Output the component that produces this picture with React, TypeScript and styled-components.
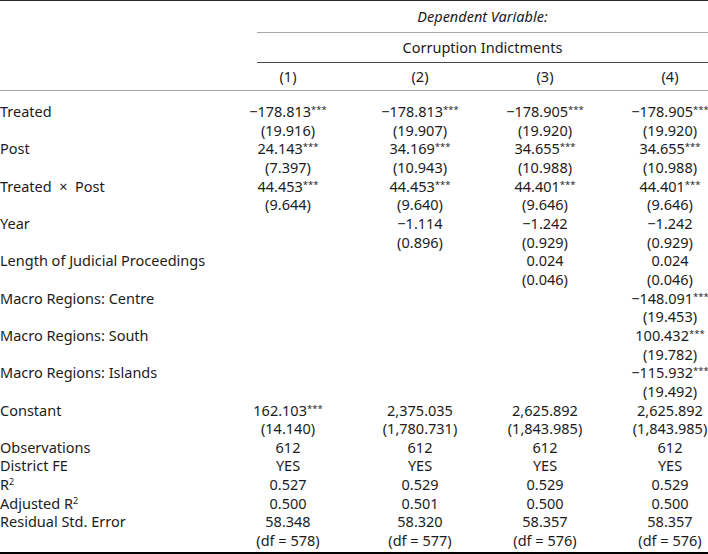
import React from "react";
import styled, { createGlobalStyle } from "styled-components";

const GlobalStyle = createGlobalStyle`
  html, body {
    margin: 0;
    padding: 0;
    background: #ffffff;
    overflow: hidden;
  }
  body {
    font-family: "Noto Sans", "Open Sans", sans-serif;
    color: #1c1c1c;
  }
`;

const COLS = "219px 138px 126px 124px 126px";

const Frame = styled.div`
  width: 708px;
  height: 554px;
  overflow: hidden;
  font-size: 14.5px;
`;

const Table = styled.div`
  width: 733px;
  border-top: 1px solid #2b2b2b;
`;

const SpanRow = styled.div<{ $h: number }>`
  display: flex;
  height: ${({ $h }) => $h}px;
`;

const Spacer = styled.div`
  width: 257px;
  flex: none;
`;

const SpanCell = styled.div<{ $line: string; $italic?: boolean; $pad: number }>`
  width: 451px;
  display: flex;
  align-items: center;
  justify-content: center;
  padding-bottom: ${({ $pad }) => $pad}px;
  box-sizing: border-box;
  border-bottom: ${({ $line }) => $line};
  font-style: ${({ $italic }) => ($italic ? "italic" : "normal")};
`;

const Grid = styled.div`
  display: grid;
  grid-template-columns: ${COLS};
`;

const NumberRow = styled(Grid)`
  height: 26px;
  align-items: center;
  border-bottom: 1px solid #a0a0a0;
  padding-bottom: 1px;
`;

const Body = styled.div`
  padding-top: 11px;
  padding-bottom: 2px;
  border-bottom: 3px solid #000;
`;

const Line = styled(Grid)`
  line-height: 18.65px;
  white-space: nowrap;
`;

const Label = styled.div`
  text-align: left;
  white-space: pre;
`;

const Cell = styled.div`
  text-align: center;
`;

const Stars = styled.sup`
  font-size: 9.5px;
  line-height: 0;
  vertical-align: 4px;
`;

const Sup = styled.sup`
  font-size: 9px;
  line-height: 0;
  vertical-align: 5px;
`;

type Coef = { label: React.ReactNode; est: string[]; se: string[] };

const coefs: Coef[] = [
  {
    label: "Treated",
    est: ["−178.813***", "−178.813***", "−178.905***", "−178.905***"],
    se: ["(19.916)", "(19.907)", "(19.920)", "(19.920)"],
  },
  {
    label: "Post",
    est: ["24.143***", "34.169***", "34.655***", "34.655***"],
    se: ["(7.397)", "(10.943)", "(10.988)", "(10.988)"],
  },
  {
    label: "Treated  ×  Post",
    est: ["44.453***", "44.453***", "44.401***", "44.401***"],
    se: ["(9.644)", "(9.640)", "(9.646)", "(9.646)"],
  },
  {
    label: "Year",
    est: ["", "−1.114", "−1.242", "−1.242"],
    se: ["", "(0.896)", "(0.929)", "(0.929)"],
  },
  {
    label: "Length of Judicial Proceedings",
    est: ["", "", "0.024", "0.024"],
    se: ["", "", "(0.046)", "(0.046)"],
  },
  {
    label: "Macro Regions: Centre",
    est: ["", "", "", "−148.091***"],
    se: ["", "", "", "(19.453)"],
  },
  {
    label: "Macro Regions: South",
    est: ["", "", "", "100.432***"],
    se: ["", "", "", "(19.782)"],
  },
  {
    label: "Macro Regions: Islands",
    est: ["", "", "", "−115.932***"],
    se: ["", "", "", "(19.492)"],
  },
  {
    label: "Constant",
    est: ["162.103***", "2,375.035", "2,625.892", "2,625.892"],
    se: ["(14.140)", "(1,780.731)", "(1,843.985)", "(1,843.985)"],
  },
];

const stats: { label: React.ReactNode; values: string[] }[] = [
  { label: "Observations", values: ["612", "612", "612", "612"] },
  { label: "District FE", values: ["YES", "YES", "YES", "YES"] },
  {
    label: (
      <>
        R<Sup>2</Sup>
      </>
    ),
    values: ["0.527", "0.529", "0.529", "0.529"],
  },
  {
    label: (
      <>
        Adjusted R<Sup>2</Sup>
      </>
    ),
    values: ["0.500", "0.501", "0.500", "0.500"],
  },
  { label: "Residual Std. Error", values: ["58.348", "58.320", "58.357", "58.357"] },
  { label: "", values: ["(df = 578)", "(df = 577)", "(df = 576)", "(df = 576)"] },
];

function Value({ text }: { text: string }) {
  const m = text.match(/^(.*?)(\*+)$/);
  if (!m) return <Cell>{text}</Cell>;
  return (
    <Cell>
      {m[1]}
      <Stars>{m[2]}</Stars>
    </Cell>
  );
}

export default function App() {
  return (
    <Frame>
      <GlobalStyle />
      <Table>
        <SpanRow $h={32}>
          <Spacer />
          <SpanCell $italic $pad={2} $line="1px solid #a8a8a8">
            Dependent Variable:
          </SpanCell>
        </SpanRow>
        <SpanRow $h={30}>
          <Spacer />
          <SpanCell $pad={1} $line="1.5px solid #4a4a4a">
            Corruption Indictments
          </SpanCell>
        </SpanRow>
        <NumberRow>
          <Label />
          <Cell>(1)</Cell>
          <Cell>(2)</Cell>
          <Cell>(3)</Cell>
          <Cell>(4)</Cell>
        </NumberRow>
        <Body>
          {coefs.map((c, i) => (
            <React.Fragment key={i}>
              <Line>
                <Label>{c.label}</Label>
                {c.est.map((v, j) => (
                  <Value key={j} text={v} />
                ))}
              </Line>
              <Line>
                <Label />
                {c.se.map((v, j) => (
                  <Cell key={j}>{v}</Cell>
                ))}
              </Line>
            </React.Fragment>
          ))}
          {stats.map((s, i) => (
            <Line key={i}>
              <Label>{s.label}</Label>
              {s.values.map((v, j) => (
                <Cell key={j}>{v}</Cell>
              ))}
            </Line>
          ))}
        </Body>
      </Table>
    </Frame>
  );
}
